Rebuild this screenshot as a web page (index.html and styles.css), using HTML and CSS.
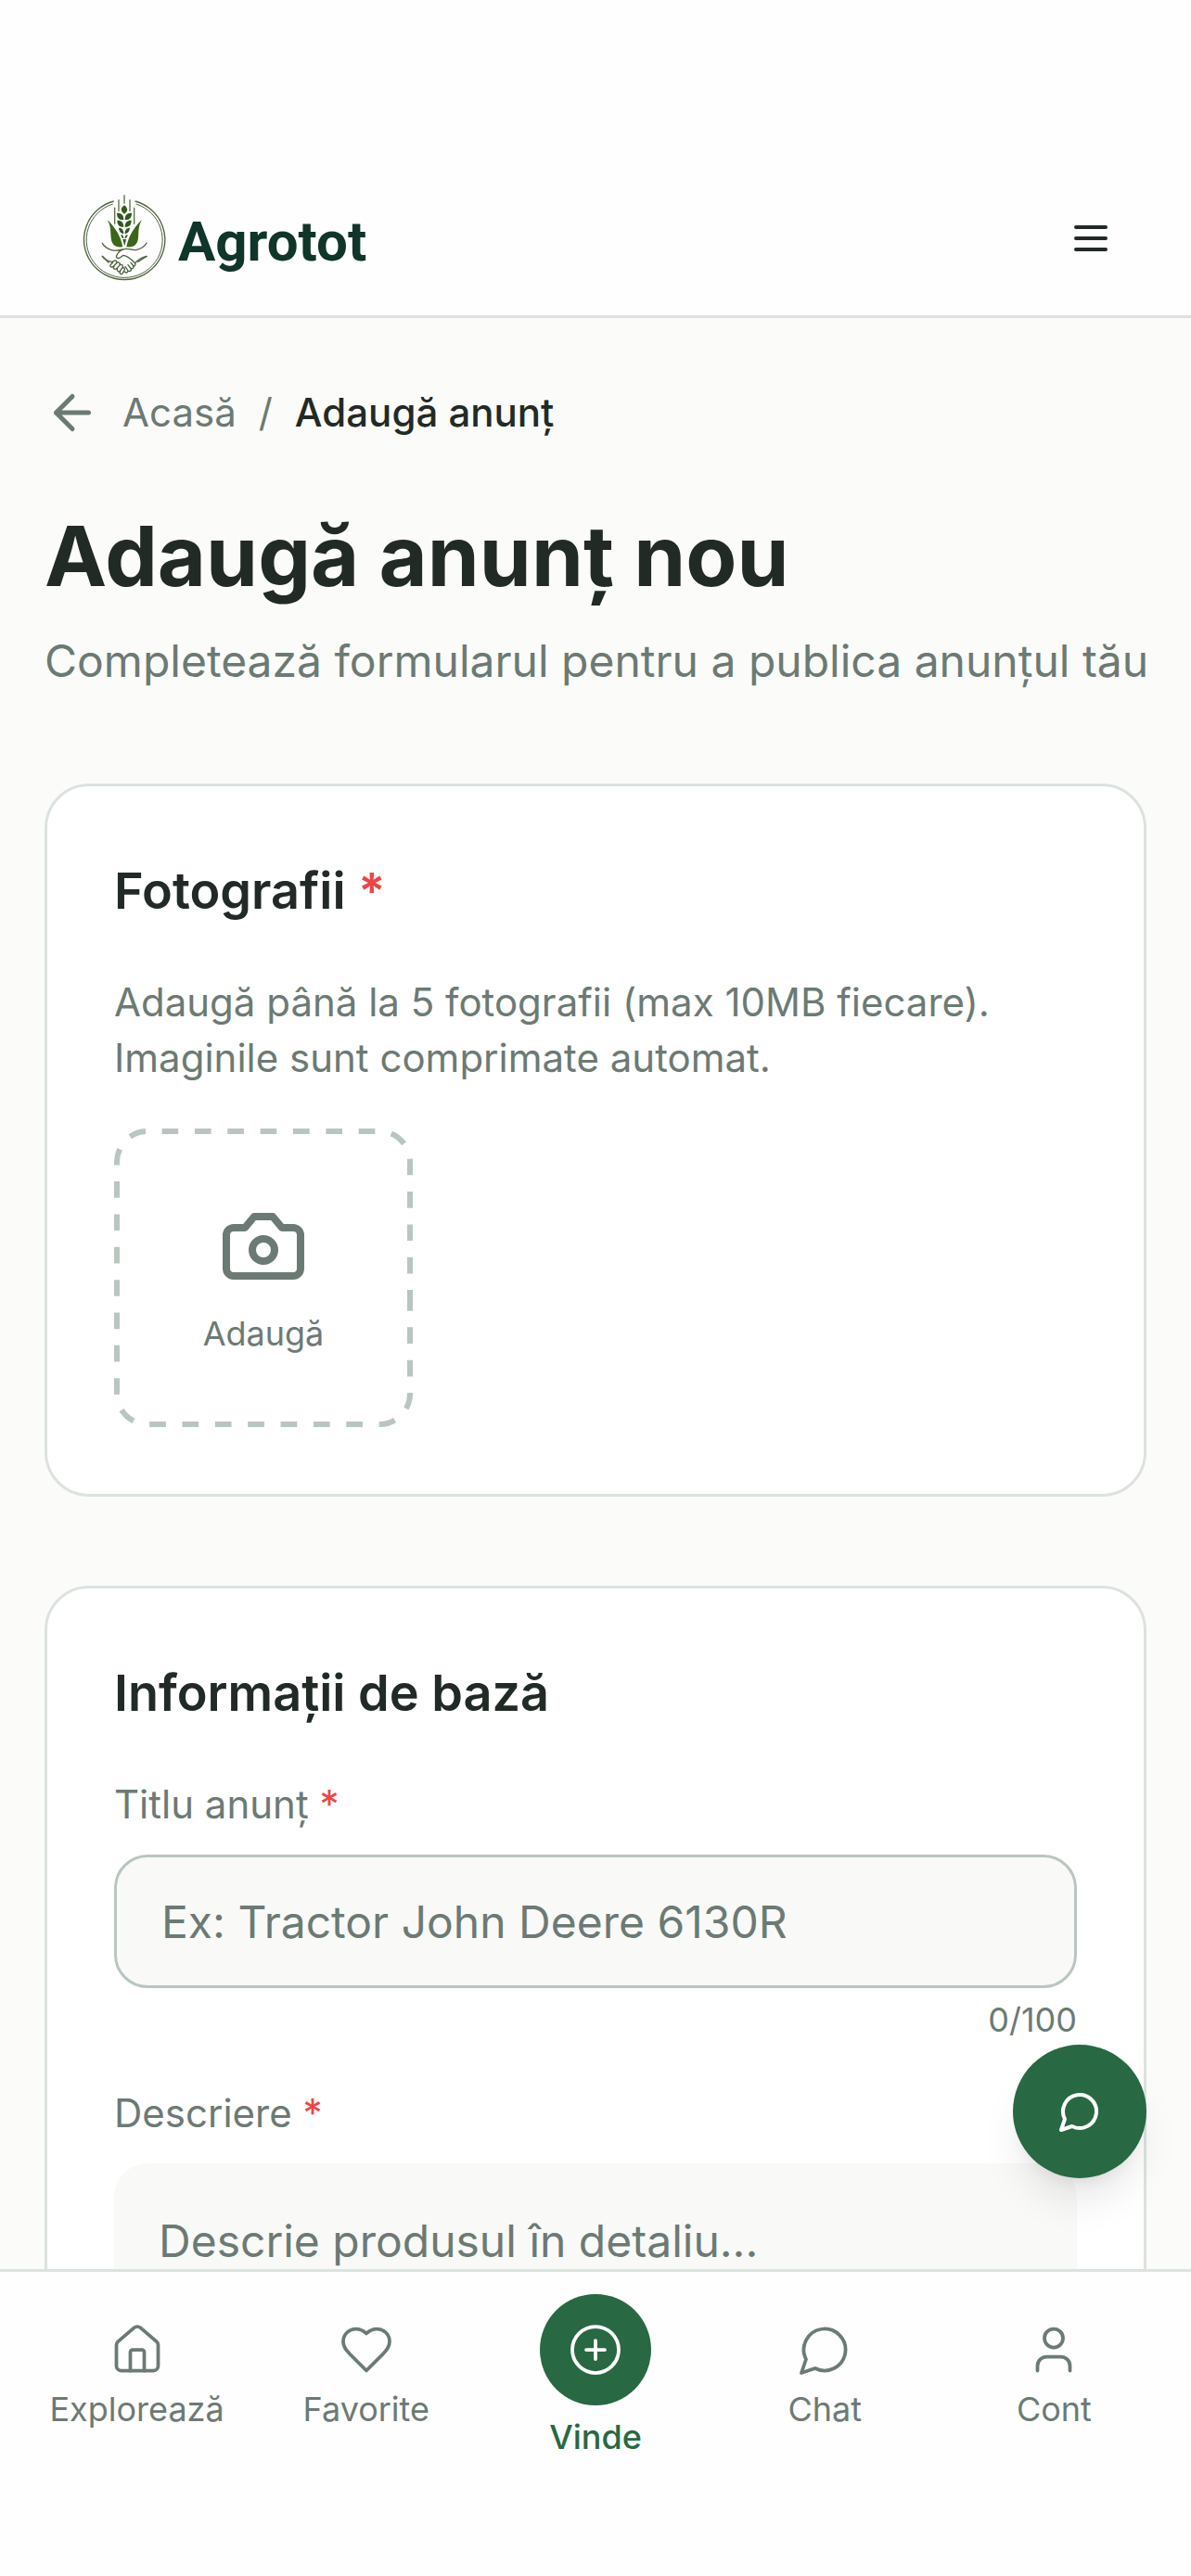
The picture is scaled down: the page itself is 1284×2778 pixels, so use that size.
FILE: index.html
```html
<!DOCTYPE html>
<html lang="ro">
<head>
  <meta charset="UTF-8" />
  <meta name="viewport" content="width=device-width, initial-scale=1.0" />
  <title>Adaugă anunț nou - Agrotot</title>
  <link rel="stylesheet" href="styles.css">
</head>
<body>
  <header class="header">
    <a class="brand" href="#">
      <svg class="brand-logo" viewBox="84 60 276 285" aria-hidden="true">
        <!-- ring -->
        <g fill="none" stroke="#4f6340">
          <path d="M188 84 A131 129 0 1 0 257 84" stroke-width="4" />
          <path d="M185 93 A123 122 0 1 0 260 93" stroke-width="3" />
        </g>
        <!-- awns -->
        <path d="M222 64v28M204 79v38M240 79v38M191 104v54M254 104v54" stroke="#5c7048" stroke-width="4" fill="none" />
        <!-- grains -->
        <g fill="#2f5a1b">
          <path d="M222 97c13 11 13 19 0 28c-13-9-13-17 0-28z" />
          <path d="M198 122c14-1 22 6 22 22c-14 2-22-6-22-22zM246 122c-14-1-22 6-22 22c14 2 22-6 22-22z" />
          <path d="M199 146c13-1 21 6 21 21c-13 2-21-6-21-21zM245 146c-13-1-21 6-21 21c13 2 21-6 21-21z" />
          <path d="M204 170c10 0 16 6 16 19c-9 0-15-8-16-19zM240 170c-10 0-16 6-16 19c9 0 15-8 16-19z" />
          <path d="M211 192c6 1 9 5 9 13c-5-1-8-6-9-13zM233 192c-6 1-9 5-9 13c5-1 8-6 9-13z" />
          <path d="M217 207h11l-5 22z" />
        </g>
        <!-- leaves -->
        <path d="M167 144c20 20 42 46 50 88c-24 3-37-8-38-30c-2-22 0-38-12-58z" fill="#38671b" />
        <path d="M279 144c-20 20-42 46-50 88c24 3 37-8 38-30c2-22 0-38 12-58z" fill="#38671b" />
        <!-- hands -->
        <g fill="none" stroke="#4f6340" stroke-width="4" stroke-linecap="round" stroke-linejoin="round">
          <path d="M151 220c12 20 38 29 66 20c18-7 30 5 45 1c15-3 26-11 32-22" />
          <path d="M217 240c-9 5-17 11-20 20c-3 9 6 11 14 5l8-6c12 2 25 12 38 25c8-10 22-18 37-22" />
          <path d="M151 262c7 10 18 16 31 19l8-5c6-2 10 4 6 10l-11 10c-8 4-11-3-6-8l6-6" />
          <path d="M196 284c8-6 15 1 10 8l-9 10c-7 5-13-1-8-8M207 291c7-5 13 1 9 8l-7 10c-6 6-13 0-9-7M216 300c6-3 9 3 6 8l-5 9c-4 6-12 2-9-5" />
          <path d="M223 312c8 7 13 0 9-6l-7-11M233 308c8 6 14-1 9-8l-8-10M242 300c8 5 14-3 8-9l-7-8M250 294c7 1 9-5 7-10M151 262l20 20M294 262l-28 18" />
        </g>
      </svg>
      <span class="brand-name">Agrotot</span>
    </a>
    <button class="menu-btn" type="button" aria-label="Meniu">
      <svg class="icon icon-sm icon-bold" viewBox="0 0 24 24"><path d="M4 6h16M4 12h16M4 18h16" /></svg>
    </button>
  </header>

  <main class="content">
    <nav class="breadcrumb" aria-label="Breadcrumb">
      <a class="back" href="#" aria-label="Înapoi">
        <svg class="icon icon-bold" viewBox="0 0 24 24"><path d="m12 19-7-7 7-7M19 12H5" /></svg>
      </a>
      <a href="#">Acasă</a>
      <span>/</span>
      <span class="current">Adaugă anunț</span>
    </nav>

    <h1>Adaugă anunț nou</h1>
    <p class="lead">Completează formularul pentru a publica anunțul tău</p>

    <form class="form">
      <section class="card">
        <h2>Fotografii <span class="req">*</span></h2>
        <p class="hint">Adaugă până la 5 fotografii (max 10MB fiecare). Imaginile sunt comprimate automat.</p>
        <div class="photos">
          <button class="photo-add" type="button">
            <svg class="photo-frame" viewBox="0 0 322 322" aria-hidden="true">
              <path pathLength="1229" d="M319 179V286a33 33 0 0 1-33 33H36a33 33 0 0 1-33-33V36a33 33 0 0 1 33-33H286a33 33 0 0 1 33 33V179" />
            </svg>
            <svg class="icon icon-lg icon-bold" viewBox="0 0 24 24"><path d="M14.5 4h-5L7 7H4a2 2 0 0 0-2 2v9a2 2 0 0 0 2 2h16a2 2 0 0 0 2-2V9a2 2 0 0 0-2-2h-3l-2.5-3z" /><circle cx="12" cy="13" r="3" /></svg>
            <span>Adaugă</span>
          </button>
        </div>
      </section>

      <section class="card">
        <h2>Informații de bază</h2>
        <div class="field">
          <label for="title">Titlu anunț <span class="req">*</span></label>
          <input type="text" id="title" maxlength="100" placeholder="Ex: Tractor John Deere 6130R" required>
          <div class="counter">0/100</div>
        </div>
        <div class="field">
          <label for="description">Descriere <span class="req">*</span></label>
          <textarea id="description" rows="5" placeholder="Descrie produsul în detaliu..." required></textarea>
        </div>
      </section>
    </form>
  </main>

  <div class="bottom">
    <button class="fab" type="button" aria-label="Asistență">
      <svg class="icon icon-sm icon-bold" viewBox="0 0 24 24"><path d="M7.9 20A9 9 0 1 0 4 16.1L2 22Z" /></svg>
    </button>
    <nav class="tabs">
      <a class="tab" href="#">
        <svg class="icon" viewBox="0 0 24 24"><path d="M15 21v-8a1 1 0 0 0-1-1h-4a1 1 0 0 0-1 1v8" /><path d="M3 10a2 2 0 0 1 .709-1.528l7-5.999a2 2 0 0 1 2.582 0l7 5.999A2 2 0 0 1 21 10v9a2 2 0 0 1-2 2H5a2 2 0 0 1-2-2z" /></svg>
        <span>Explorează</span>
      </a>
      <a class="tab" href="#">
        <svg class="icon" viewBox="0 0 24 24"><path d="M19 14c1.49-1.46 3-3.21 3-5.5A5.5 5.5 0 0 0 16.5 3c-1.76 0-3 .5-4.5 2-1.5-1.5-2.74-2-4.5-2A5.5 5.5 0 0 0 2 8.5c0 2.3 1.5 4.05 3 5.5l7 7Z" /></svg>
        <span>Favorite</span>
      </a>
      <a class="tab tab-active" href="#" aria-current="page">
        <span class="tab-circle">
          <svg class="icon" viewBox="0 0 24 24"><circle cx="12" cy="12" r="10" /><path d="M8 12h8M12 8v8" /></svg>
        </span>
        <span>Vinde</span>
      </a>
      <a class="tab" href="#">
        <svg class="icon" viewBox="0 0 24 24"><path d="M7.9 20A9 9 0 1 0 4 16.1L2 22Z" /></svg>
        <span>Chat</span>
      </a>
      <a class="tab" href="#">
        <svg class="icon" viewBox="0 0 24 24"><path d="M19 21v-2a4 4 0 0 0-4-4H9a4 4 0 0 0-4 4v2" /><circle cx="12" cy="7" r="4" /></svg>
        <span>Cont</span>
      </a>
    </nav>
  </div>
</body>
</html>
```
FILE: styles.css
```css
:root {
  --bg: #fbfbf9;
  --surface: #fefefe;
  --field: #f9f9f7;
  --border: #dce3df;
  --border-strong: #b9c6bf;
  --text: #222a26;
  --muted: #6c7a74;
  --primary: #286843;
  --danger: #ef4444;
}
* { box-sizing: border-box; }
body {
  margin: 0;
  height: 100vh;
  display: flex;
  flex-direction: column;
  background: var(--bg);
  color: var(--text);
  font-family: Inter, "Liberation Sans", sans-serif;
  font-size: 48px;
  line-height: 72px;
}
a { color: inherit; text-decoration: none; }
button, input, textarea { font: inherit; color: inherit; }
button { border: 0; background: none; padding: 0; cursor: pointer; }
h1, h2, p { margin: 0; }

.icon { width: 60px; height: 60px; display: block; flex: none; fill: none; stroke: currentColor; stroke-width: 1.5; stroke-linecap: round; stroke-linejoin: round; }
.icon-bold { stroke-width: 2; }
.icon-sm { width: 48px; height: 48px; }
.icon-lg { width: 96px; height: 96px; }

/* header */
.header {
  flex: none;
  display: flex;
  align-items: center;
  justify-content: space-between;
  padding: 209px 48px 36px 88px;
  background: var(--surface);
  border-bottom: 3px solid var(--border);
}
.brand { display: flex; align-items: center; gap: 12px; }
.brand-logo { width: 92px; height: 95px; display: block; }
.brand-name { font-family: Roboto, "Liberation Sans", sans-serif; font-weight: 700; font-size: 60px; padding-top: 8px; color: #10352a; }
.menu-btn { padding: 0 36px; }

/* page */
.content { flex: 1; min-height: 0; overflow-y: auto; scrollbar-width: none; padding: 72px 48px; }
.breadcrumb { display: flex; align-items: center; gap: 24px; margin-bottom: 72px; font-size: 42px; line-height: 60px; color: var(--muted); }
.breadcrumb .current { color: var(--text); font-weight: 500; }
h1 { font-size: 90px; line-height: 106px; font-weight: 700; }
.lead { margin-top: 24px; color: var(--muted); white-space: nowrap; }

.form { display: flex; flex-direction: column; gap: 96px; margin-top: 96px; }
.card { background: #fff; border: 3px solid var(--border); border-radius: 48px; padding: 72px; }
.card h2 { font-size: 54px; line-height: 81px; font-weight: 600; margin-bottom: 50px; }
.req { color: var(--danger); }
.hint { font-size: 42px; line-height: 60px; color: var(--muted); margin-bottom: 46px; }

.photos { display: grid; grid-template-columns: repeat(3, 1fr); gap: 36px; }
.photo-add {
  position: relative;
  aspect-ratio: 1;
  display: flex;
  flex-direction: column;
  align-items: center;
  justify-content: center;
  gap: 24px;
  font-size: 36px;
  line-height: 45px;
  color: var(--muted);
}
.photo-frame { position: absolute; inset: 0; width: 100%; height: 100%; fill: none; stroke: var(--border-strong); stroke-width: 6; stroke-dasharray: 18 18; }

.field + .field { margin-top: 48px; }
.field label { display: block; font-size: 42px; line-height: 60px; color: var(--muted); margin-bottom: 24px; }
.field input, .field textarea { display: block; width: 100%; padding: 33px 48px; background: var(--field); border: 3px solid var(--border-strong); border-radius: 36px; outline: 0; resize: none; }
.field input { height: 144px; }
.field textarea { border: 0; padding: 48px; }
.field ::placeholder { color: var(--muted); opacity: 1; }
.counter { margin-top: 12px; font-size: 36px; line-height: 45px; text-align: right; color: var(--muted); }

/* bottom bar */
.bottom { position: relative; flex: none; background: var(--surface); border-top: 3px solid var(--border); padding: 24px 24px 127px; }
.tabs { display: flex; align-items: center; }
.tab { flex: 1; display: flex; flex-direction: column; align-items: center; gap: 12px; font-size: 36px; line-height: 45px; color: var(--muted); }
.tab-active { color: var(--primary); font-weight: 500; }
.tab-circle { width: 120px; height: 120px; border-radius: 50%; background: var(--primary); color: #fff; display: flex; align-items: center; justify-content: center; }
.fab {
  position: absolute;
  right: 48px;
  bottom: 100%;
  margin-bottom: 101px;
  width: 144px;
  height: 144px;
  border-radius: 50%;
  background: var(--primary);
  color: #fff;
  display: flex;
  align-items: center;
  justify-content: center;
  box-shadow: 0 30px 45px -9px rgba(0,0,0,0.1), 0 12px 18px -12px rgba(0,0,0,0.1);
}
```
